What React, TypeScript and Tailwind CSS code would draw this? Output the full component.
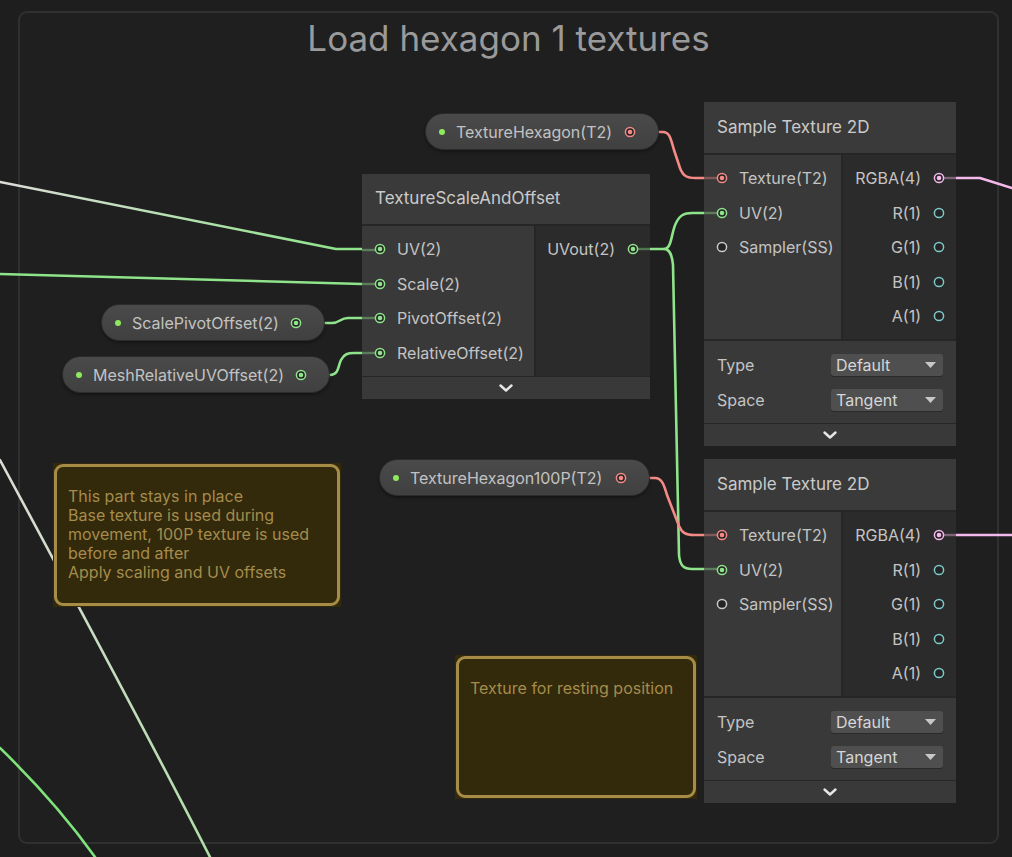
import React from "react";

const GREEN = "#8fe38b";
const RED = "#f38a86";
const PINK = "#f4b8ea";
const CYAN = "#7ecaca";
const GRAY = "#c9c9c9";

type PortProps = { color: string; on?: boolean };

function Port({ color, on }: PortProps) {
  return (
    <svg width="12" height="12" viewBox="0 0 12 12" className="shrink-0">
      <circle cx="6" cy="6" r="4.6" fill="#242424" stroke={color} strokeWidth="1.5" />
      {on && <circle cx="6" cy="6" r="2.3" fill={color} />}
    </svg>
  );
}

function InRow({ label, color, on }: { label: string; color: string; on?: boolean }) {
  return (
    <div className="flex h-[34.5px] items-center gap-[11px] pl-3">
      <Port color={color} on={on} />
      <span className="whitespace-nowrap">{label}</span>
    </div>
  );
}

function OutRow({ label, color, on }: { label: string; color: string; on?: boolean }) {
  return (
    <div className="flex h-[34.5px] items-center justify-end gap-3 pr-[11px]">
      <span className="whitespace-nowrap">{label}</span>
      <Port color={color} on={on} />
    </div>
  );
}

function Chevron() {
  return (
    <div className="flex h-[23px] items-center justify-center border-t border-[#262626] bg-[#393939]">
      <svg width="16" height="10" viewBox="0 0 16 10">
        <path d="M2.5 2.5 L8 7.5 L13.5 2.5" fill="none" stroke="#e6e6e6" strokeWidth="2.4" strokeLinecap="round" strokeLinejoin="round" />
      </svg>
    </div>
  );
}

function Dropdown({ value }: { value: string }) {
  return (
    <div className="flex h-[22px] w-[112px] items-center justify-between rounded-[3px] bg-[#4f4f4f] pl-[5px] pr-[7px] text-[#d6d6d6] shadow-[0_1px_0_#2a2a2a]">
      <span>{value}</span>
      <svg width="11" height="6" viewBox="0 0 11 6">
        <path d="M0 0 H11 L5.5 6 Z" fill="#c8c8c8" />
      </svg>
    </div>
  );
}

function Pill({ x, y, w, label, color }: { x: number; y: number; w: number; label: string; color: string }) {
  return (
    <div
      className="absolute flex h-[37px] items-center rounded-full border border-[#2c2c2c] bg-gradient-to-b from-[#4a4a4a] to-[#404040] pl-[13px] pr-[22px] text-[16px] text-[#c2c2c2] shadow-[0_2px_3px_rgba(0,0,0,0.35)]"
      style={{ left: x, top: y, width: w }}
    >
      <span className="h-[6px] w-[6px] shrink-0 rounded-full bg-[#8ee95e]" />
      <span className="ml-[11px] flex-1 whitespace-nowrap">{label}</span>
      <Port color={color} on />
    </div>
  );
}

function SampleTexture({ top }: { top: number }) {
  return (
    <div className="absolute left-[704px] w-[252px] text-[16px] text-[#c4c4c4]" style={{ top }}>
      <div className="flex h-[53px] items-center border-b-2 border-[#262626] bg-[#3a3a3a] pl-[13px] text-[17px] text-[#cacaca]">
        Sample Texture 2D
      </div>
      <div className="flex h-[184px]">
        <div className="w-[139px] border-r-2 border-[#262626] bg-[#393939] pt-[6px]">
          <InRow label="Texture(T2)" color={RED} on />
          <InRow label="UV(2)" color={GREEN} on />
          <InRow label="Sampler(SS)" color={GRAY} />
        </div>
        <div className="flex-1 bg-[#2b2b2b] pt-[6px]">
          <OutRow label="RGBA(4)" color={PINK} on />
          <OutRow label="R(1)" color={CYAN} />
          <OutRow label="G(1)" color={CYAN} />
          <OutRow label="B(1)" color={CYAN} />
          <OutRow label="A(1)" color={CYAN} />
        </div>
      </div>
      <div className="flex h-[84px] flex-col border-t-2 border-[#262626] bg-[#393939] px-[13px] pt-[6px]">
        <div className="flex h-[35px] items-center justify-between">
          <span>Type</span>
          <Dropdown value="Default" />
        </div>
        <div className="flex h-[35px] items-center justify-between">
          <span>Space</span>
          <Dropdown value="Tangent" />
        </div>
      </div>
      <Chevron />
    </div>
  );
}

function Note({ x, y, w, h, lines }: { x: number; y: number; w: number; h: number; lines: string[] }) {
  return (
    <div className="absolute bg-[#33290b] p-px" style={{ left: x, top: y, width: w, height: h }}>
      <div className="h-full rounded-[9px] border-[3px] border-[#a68c47] px-[11px] pt-[20px] text-[16px] leading-[19px] text-[#a58c4c]">
        {lines.map((l) => (
          <div key={l} className="whitespace-nowrap">
            {l}
          </div>
        ))}
      </div>
    </div>
  );
}

export default function App() {
  return (
    <div className="relative h-[857px] w-[1012px] overflow-hidden bg-[#1e1e1e] font-['Inter','Noto_Sans',sans-serif]">
      {/* group */}
      <div className="absolute left-[18px] top-[11px] h-[833px] w-[981px] rounded-[9px] border-2 border-[#303030] bg-[#1f1f1f]">
        <div className="pt-[8px] text-center text-[35px] leading-[35px] text-[#9a9a9a]">Load hexagon 1 textures</div>
      </div>

      {/* edges */}
      <svg className="absolute inset-0" width="1012" height="857">
        <defs>
          <linearGradient id="g1" gradientUnits="userSpaceOnUse" x1="0" y1="0" x2="340" y2="0">
            <stop offset="0" stopColor="#dcdcd8" />
            <stop offset="1" stopColor="#8fe38b" />
          </linearGradient>
          <linearGradient id="g2" gradientUnits="userSpaceOnUse" x1="0" y1="458" x2="0" y2="857">
            <stop offset="0" stopColor="#dcdcd6" />
            <stop offset="1" stopColor="#b0dca8" />
          </linearGradient>
        </defs>
        <g fill="none" strokeWidth="2.6" strokeLinecap="round" strokeLinejoin="round">
          <path d="M0 182 L336 249 L362 249" stroke="url(#g1)" />
          <path d="M0 274 L362 284" stroke={GREEN} />
          <path d="M325 323 L332 323 C340 323 340 318 348 318 L362 318" stroke={GREEN} />
          <path d="M330 375 C339 375 338 366 341 360 C344 354 348 353 354 353 L362 353" stroke={GREEN} />
          <path d="M0 460 C70 590 140 720 210 857" stroke="url(#g2)" />
          <path d="M0 748 C35 782 65 815 95 857" stroke="#7fe27b" />
          <path d="M650 249 L664 249 C672 249 671 233 676 223 C680 215 684 213 692 213 L705 213" stroke={GREEN} />
          <path d="M664 249 C670 249 672 255 673 265 L679 555 C680 566 684 569 692 569 L705 569" stroke={GREEN} />
          <path d="M659 132 L663 132 C670 132 671 140 674 150 L680 168 C683 176 687 178 695 178 L705 178" stroke={RED} />
          <path d="M650 478 L655 478 C662 478 664 485 667 495 L679 526 C682 533 686 535 694 535 L705 535" stroke={RED} />
          <path d="M956 178 L980 178 L1012 188" stroke={PINK} />
          <path d="M956 535 L1012 535" stroke={PINK} />
        </g>
      </svg>

      {/* notes */}
      <Note
        x={53}
        y={463}
        w={288}
        h={144}
        lines={[
          "This part stays in place",
          "Base texture is used during",
          "movement, 100P texture is used",
          "before and after",
          "Apply scaling and UV offsets",
        ]}
      />
      <Note x={455} y={655} w={242} h={144} lines={["Texture for resting position"]} />

      {/* property nodes */}
      <Pill x={425} y={113} w={234} label="TextureHexagon(T2)" color={RED} />
      <Pill x={101} y={304} w={224} label="ScalePivotOffset(2)" color={GREEN} />
      <Pill x={62} y={356} w={268} label="MeshRelativeUVOffset(2)" color={GREEN} />
      <Pill x={379} y={459} w={271} label="TextureHexagon100P(T2)" color={RED} />

      {/* TextureScaleAndOffset */}
      <div className="absolute left-[362px] top-[174px] w-[288px] text-[16px] text-[#c4c4c4]">
        <div className="flex h-[52px] items-center border-b-2 border-[#262626] bg-[#3a3a3a] pl-[13px] text-[17px] text-[#cacaca]">
          TextureScaleAndOffset
        </div>
        <div className="flex h-[150px]">
          <div className="w-[174px] border-r-2 border-[#262626] bg-[#393939] pt-[6px]">
            <InRow label="UV(2)" color={GREEN} on />
            <InRow label="Scale(2)" color={GREEN} on />
            <InRow label="PivotOffset(2)" color={GREEN} on />
            <InRow label="RelativeOffset(2)" color={GREEN} on />
          </div>
          <div className="flex-1 bg-[#2b2b2b] pt-[6px]">
            <OutRow label="UVout(2)" color={GREEN} on />
          </div>
        </div>
        <Chevron />
      </div>

      <SampleTexture top={102} />
      <SampleTexture top={459} />

      {/* edge stubs inside nodes */}
      <svg className="pointer-events-none absolute inset-0" width="1012" height="857">
        <g strokeWidth="2.4" opacity="0.4">
          <line x1="362" y1="250" x2="375" y2="250" stroke={GREEN} />
          <line x1="362" y1="284" x2="375" y2="284" stroke={GREEN} />
          <line x1="362" y1="318" x2="375" y2="318" stroke={GREEN} />
          <line x1="362" y1="353" x2="375" y2="353" stroke={GREEN} />
          <line x1="638" y1="249" x2="650" y2="249" stroke={GREEN} />
          <line x1="704" y1="178" x2="717" y2="178" stroke={RED} />
          <line x1="704" y1="213" x2="717" y2="213" stroke={GREEN} />
          <line x1="704" y1="535" x2="717" y2="535" stroke={RED} />
          <line x1="704" y1="569" x2="717" y2="569" stroke={GREEN} />
          <line x1="944" y1="178" x2="956" y2="178" stroke={PINK} />
          <line x1="944" y1="535" x2="956" y2="535" stroke={PINK} />
        </g>
      </svg>
    </div>
  );
}
